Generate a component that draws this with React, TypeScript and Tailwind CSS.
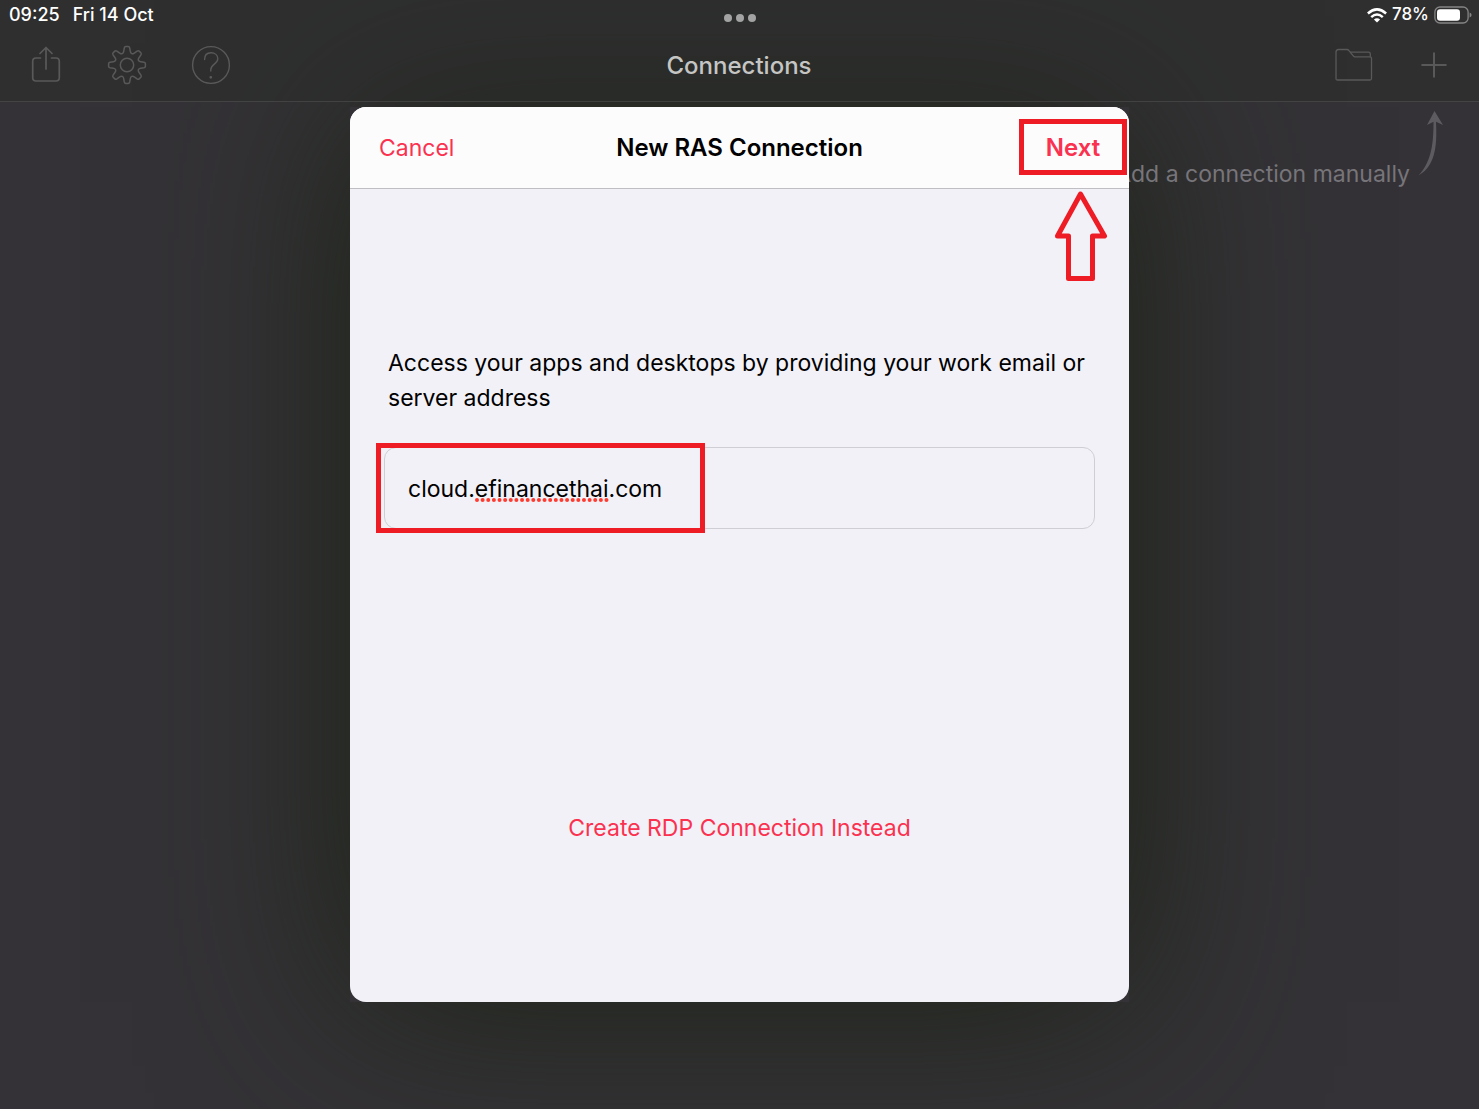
import React from 'react';

// Outline of an eight-toothed cog centred on 0,0
const gearPath = () => {
  const rotate = (x: number, y: number, deg: number) => {
    const a = (deg * Math.PI) / 180;
    const rx = x * Math.cos(a) - y * Math.sin(a);
    const ry = x * Math.sin(a) + y * Math.cos(a);
    return `${rx.toFixed(2)} ${ry.toFixed(2)}`;
  };
  let d = '';
  for (let i = 0; i < 8; i++) {
    const a = i * 45;
    d += `${i === 0 ? 'M' : 'L'}${rotate(-3.3, -13.6, a)}`;
    d += `L${rotate(-2.7, -17, a)}Q${rotate(-2.4, -18.4, a)} ${rotate(-1.2, -18.4, a)}`;
    d += `L${rotate(1.2, -18.4, a)}Q${rotate(2.4, -18.4, a)} ${rotate(2.7, -17, a)}`;
    d += `L${rotate(3.3, -13.6, a)}C${rotate(3.7, -11.2, a)} ${rotate(-3.7, -11.2, a + 45)} ${rotate(-3.3, -13.6, a + 45)}`;
  }
  return d + 'Z';
};

const ShareIcon = () => (
  <svg width="30" height="38" viewBox="0 0 30 38" fill="none" stroke="currentColor" strokeWidth="1.7" strokeLinecap="round" strokeLinejoin="round">
    <path d="M9.500 12H5Q1.700 12 1.700 15.500V31.500Q1.700 35 5 35H25Q28.300 35 28.300 31.500V15.500Q28.300 12 25 12H20.500" />
    <path d="M15 23V1.500M9 7.500L15 1.500L21 7.500" />
  </svg>
);

const GearIcon = () => (
  <svg width="40" height="40" viewBox="-20 -20 40 40" fill="none" stroke="currentColor" strokeWidth="1.5" strokeLinejoin="round">
    <path d={gearPath()} />
    <circle r="6.7" />
  </svg>
);

const HelpIcon = () => (
  <svg width="40" height="40" viewBox="0 0 40 40" fill="none" stroke="currentColor" strokeWidth="1.4" strokeLinecap="round">
    <circle cx="20" cy="20" r="18.4" />
    <path d="M13.600 14.500C13.600 10.200 16.200 7.800 20 7.800C24 7.800 26.800 10.300 26.800 13.800C26.800 19 19.800 19.300 19.800 24.500V26" />
    <circle cx="19.8" cy="32.3" r="0.7" fill="currentColor" />
  </svg>
);

const FolderIcon = () => (
  <svg width="38" height="34" viewBox="0 0 38 34" fill="none" stroke="currentColor" strokeWidth="1.3" strokeLinejoin="round">
    <path d="M3.500 1.500H12Q13 1.500 13.700 2.300L18.500 8.200Q19 8.800 20 8.800H35Q36.500 8.800 36.500 10.300V30.500Q36.500 32 35 32H2.500Q1 32 1 30.500V4Q1 1.500 3.500 1.500Z" />
    <path d="M15 4.200H33.500Q35.300 4.200 35.300 6V8.800" />
  </svg>
);

const PlusIcon = () => (
  <svg width="26" height="26" viewBox="0 0 26 26" fill="none" stroke="currentColor" strokeWidth="2" strokeLinecap="round">
    <path d="M13 1.200V24.800M1.200 13H24.800" />
  </svg>
);

const WifiIcon = () => (
  <svg width="20" height="15" viewBox="0 0 20 15" fill="none" stroke="currentColor" strokeWidth="2.5">
    <path d="M0.900 5.500Q10 -2.700 19.100 5.500" />
    <path d="M4.200 9.100Q10 3.900 15.800 9.100" />
    <path d="M10 14.600L6.900 11.500Q10 8.900 13.100 11.500Z" fill="currentColor" stroke="none" />
  </svg>
);

const BatteryIcon = () => (
  <svg width="38" height="18" viewBox="0 0 38 18" fill="none">
    <rect x="0.9" y="1" width="33.2" height="16" rx="5" stroke="#858585" strokeWidth="1.3" />
    <rect x="3" y="3.2" width="23" height="11.6" rx="3" fill="#fff" />
    <path d="M35.600 6.500Q37.600 7.200 37.600 9T35.600 11.500Z" fill="#858585" />
  </svg>
);

const StatusBar = () => (
  <div className="grid h-7 grid-cols-3 items-center pl-[9px] pr-[7px] pt-px text-[17px] font-medium text-white">
    <div className="flex gap-[13px] text-lg">
      <span>09:25</span>
      <span>Fri 14 Oct</span>
    </div>
    <div className="flex justify-center gap-1 pt-1.5">
      <span className="size-2 rounded-full bg-[#a3a3a3]" />
      <span className="size-2 rounded-full bg-[#a3a3a3]" />
      <span className="size-2 rounded-full bg-[#a3a3a3]" />
    </div>
    <div className="flex items-center justify-end gap-[5px]">
      <WifiIcon />
      <span>78%</span>
      <BatteryIcon />
    </div>
  </div>
);

const Toolbar = () => (
  <div className="grid h-[73px] grid-cols-3 items-center pl-[31px] pr-8 text-[#595959]">
    <div className="flex items-center">
      <button type="button" aria-label="Share" className="mr-[46px]"><ShareIcon /></button>
      <button type="button" aria-label="Settings" className="mr-11"><GearIcon /></button>
      <button type="button" aria-label="Help"><HelpIcon /></button>
    </div>
    <h1 className="pt-0.5 text-center text-2xl font-medium text-[#c5c5c3]">Connections</h1>
    <div className="flex items-center justify-end gap-12">
      <button type="button" aria-label="New folder"><FolderIcon /></button>
      <button type="button" aria-label="Add connection"><PlusIcon /></button>
    </div>
  </div>
);

const Hint = () => (
  <div className="flex justify-end gap-2 pr-[35px] pt-2 text-[#77757a]">
    <p className="pt-12 text-[23px] leading-8">Add a connection manually</p>
    <svg width="26" height="68" viewBox="0 0 26 68" className="text-[#5d5b5f]">
      <path d="M16.500 1L25 15L18 11.800C18.800 30 19.500 55 0.500 65.500C14.500 51 15.500 30 15.500 11.800L9 15Z" fill="currentColor" />
    </svg>
  </div>
);

const ConnectionDialog = () => (
  <form
    role="dialog"
    aria-labelledby="dialog-title"
    className="w-full max-w-[779px] overflow-hidden rounded-2xl bg-[#f2f1f7] text-[23px] text-black"
    onSubmit={(e) => e.preventDefault()}
  >
    <div className="grid h-[82px] grid-cols-[1fr_auto_1fr] items-center border-b border-[#bfbfc3] bg-[#fcfcfc] px-0.5 pb-px">
      <button type="button" className="justify-self-start pl-[27px] pt-0.5 text-[#fb3150]">Cancel</button>
      <h2 id="dialog-title" className="pt-0.5 text-2xl font-semibold">New RAS Connection</h2>
      <div className="relative justify-self-end">
        <button type="submit" className="block h-14 w-[108px] border-[5px] border-[#ee1c24] pt-0.5 text-2xl font-semibold text-[#fb3150]">Next</button>
        <svg width="56" height="92" viewBox="0 0 56 92" className="absolute right-[18px] top-[70px]">
          <path d="M27.500 5L51.500 47H39.500V89.500H15.500V47H4.500Z" fill="none" stroke="#ee1c24" strokeWidth="5" strokeLinejoin="round" />
        </svg>
      </div>
    </div>

    <div className="flex flex-col px-[34px] pb-[156px] pt-[157px]">
      <label htmlFor="server" className="pl-1 leading-[35px]">
        Access your apps and desktops by providing your work email or server address
      </label>
      <div className="relative mt-[31px]">
        <input
          id="server"
          type="text"
          defaultValue="cloud.efinancethai.com"
          spellCheck={false}
          className="h-[82px] w-full rounded-xl border border-[#cfced4] px-[23px] pt-0.5 outline-none"
        />
        {/* Spelling mark under the host name */}
        <svg width="134" height="4" viewBox="0 0 134 4" className="absolute left-[91px] top-[51px]">
          <path d="M2 2H132" stroke="#ff3b30" strokeWidth="4" strokeLinecap="round" strokeDasharray="0 5.63" />
        </svg>
        <div className="pointer-events-none absolute -left-2 -top-1 h-[90px] w-[329px] border-[5px] border-[#ee1c24]" />
      </div>
      <button type="button" className="mt-[281px] self-center leading-9 text-[#fb3150]">
        Create RDP Connection Instead
      </button>
    </div>
  </form>
);

const App: React.FC = () => {
  return (
    <div className="relative min-h-screen overflow-hidden bg-[#343236] font-['Inter',sans-serif]">
      {/* Shade that the modal throws on the screen behind it */}
      <div className="absolute inset-x-0 inset-y-[107px] mx-auto max-w-[779px] shadow-[0_0_180px_rgb(28,35,22)]" />

      {/* Connections screen */}
      <header className="relative border-b border-white/10 bg-[#2a2c2a]/50">
        <StatusBar />
        <Toolbar />
      </header>
      <div className="relative">
        <Hint />
      </div>

      {/* Modal */}
      <div className="absolute inset-0 flex items-start justify-center pt-[107px]">
        <ConnectionDialog />
      </div>
    </div>
  );
};

export default App;
